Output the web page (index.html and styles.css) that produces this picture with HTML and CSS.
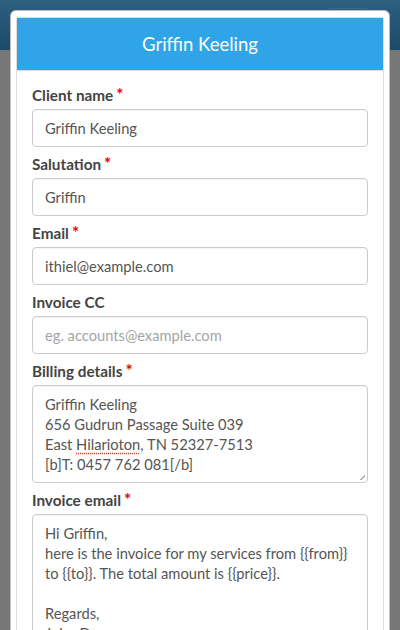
FILE: index.html
```html
<!DOCTYPE html>
<html lang="en">
<head>
<meta charset="utf-8">
<title>Griffin Keeling</title>
<link rel="stylesheet" href="styles.css">
</head>
<body>
<div class="page">
  <div class="navbar">
    <span class="nav-btn"></span>
  </div>
  <div class="backdrop"></div>
</div>
<div class="modal">
  <div class="panel">
    <div class="panel-heading">Griffin Keeling</div>
    <form class="panel-body">
      <div class="form-group">
        <label class="label">Client name<span class="req">*</span></label>
        <input class="control" type="text" value="Griffin Keeling">
      </div>
      <div class="form-group">
        <label class="label">Salutation<span class="req">*</span></label>
        <input class="control" type="text" value="Griffin">
      </div>
      <div class="form-group">
        <label class="label">Email<span class="req">*</span></label>
        <input class="control" type="text" value="ithiel@example.com">
      </div>
      <div class="form-group">
        <label class="label">Invoice CC</label>
        <input class="control" type="text" placeholder="eg. accounts@example.com">
      </div>
      <div class="form-group">
        <label class="label">Billing details<span class="req">*</span></label>
        <div class="control area billing" role="textbox" aria-multiline="true">Griffin Keeling<br>656 Gudrun Passage Suite 039<br>East <span class="misspelt">Hilarioton</span>, TN 52327-7513<br>[b]T: 0457 762 081[/b]</div>
      </div>
      <div class="form-group">
        <label class="label">Invoice email<span class="req">*</span></label>
        <div class="control area mail" role="textbox" aria-multiline="true">Hi Griffin,<br>here is the invoice for my services from {{from}}<br>to {{to}}. The total amount is {{price}}.<br><br>Regards,<br>John Doe</div>
      </div>
    </form>
  </div>
</div>
</body>
</html>
```
FILE: styles.css
```css
html, body {
  margin: 0;
  padding: 0;
  height: 100%;
  overflow: hidden;
}
body {
  font-family: Lato, "Open Sans", sans-serif;
  font-size: 14.7px;
  line-height: 20px;
  color: #555;
  background: #777;
}
.page {
  display: flex;
  flex-direction: column;
  height: 100%;
}
.navbar {
  height: 50px;
  flex: none;
  background: linear-gradient(#2e5f80, #1c4a6b);
  display: flex;
  justify-content: flex-end;
  padding: 8px 31px 0 0;
  box-sizing: border-box;
}
.nav-btn {
  width: 42px;
  height: 34px;
  border: 1px solid #3b6a8a;
  border-radius: 4px;
  box-sizing: border-box;
}
.backdrop {
  flex: 1;
  background: #777;
}
.modal {
  position: absolute;
  top: 10px;
  left: 10px;
  width: 380px;
  box-sizing: border-box;
  background: #fff;
  border: 1px solid rgba(0,0,0,0.25);
  border-radius: 6px;
  padding: 6px 5px 5px;
}
.panel {
  border: 1px solid #ddd;
  border-radius: 2px;
}
.panel-heading {
  height: 52px;
  background: #2fa4e7;
  color: #fff;
  font-size: 18.5px;
  line-height: 52px;
  text-align: center;
  border-bottom: 1px solid #ddd;
}
.panel-body {
  padding: 15px;
  margin: 0;
}
.form-group {
  margin-bottom: 8px;
}
.label {
  display: block;
  font-weight: 700;
  font-size: 15.3px;
  line-height: 18px;
  color: #444;
  margin-bottom: 5px;
}
.req {
  color: #e00;
  font-size: 17px;
  font-weight: 700;
  margin-left: 3px;
  vertical-align: top;
  line-height: 17px;
}
.control {
  display: block;
  width: 100%;
  box-sizing: border-box;
  height: 38px;
  padding: 8px 12px;
  border: 1px solid #ccc;
  border-radius: 4px;
  font-family: inherit;
  font-size: 14.7px;
  line-height: 20px;
  color: #555;
  background: #fff;
  box-shadow: inset 0 1px 1px rgba(0,0,0,0.05);
  margin: 0;
}
.control::placeholder {
  color: #a5a5a5;
}
.area {
  height: auto;
  position: relative;
}
.billing {
  height: 98px;
}
.billing::after {
  content: "";
  position: absolute;
  right: 2px;
  bottom: 2px;
  width: 5px;
  height: 5px;
  background: linear-gradient(135deg, transparent 45%, #aaa 45%, #aaa 60%, transparent 60%);
}
.misspelt {
  text-decoration: underline dotted #e33;
  text-underline-offset: 3px;
}
.mail {
  height: 160px;
}
```
